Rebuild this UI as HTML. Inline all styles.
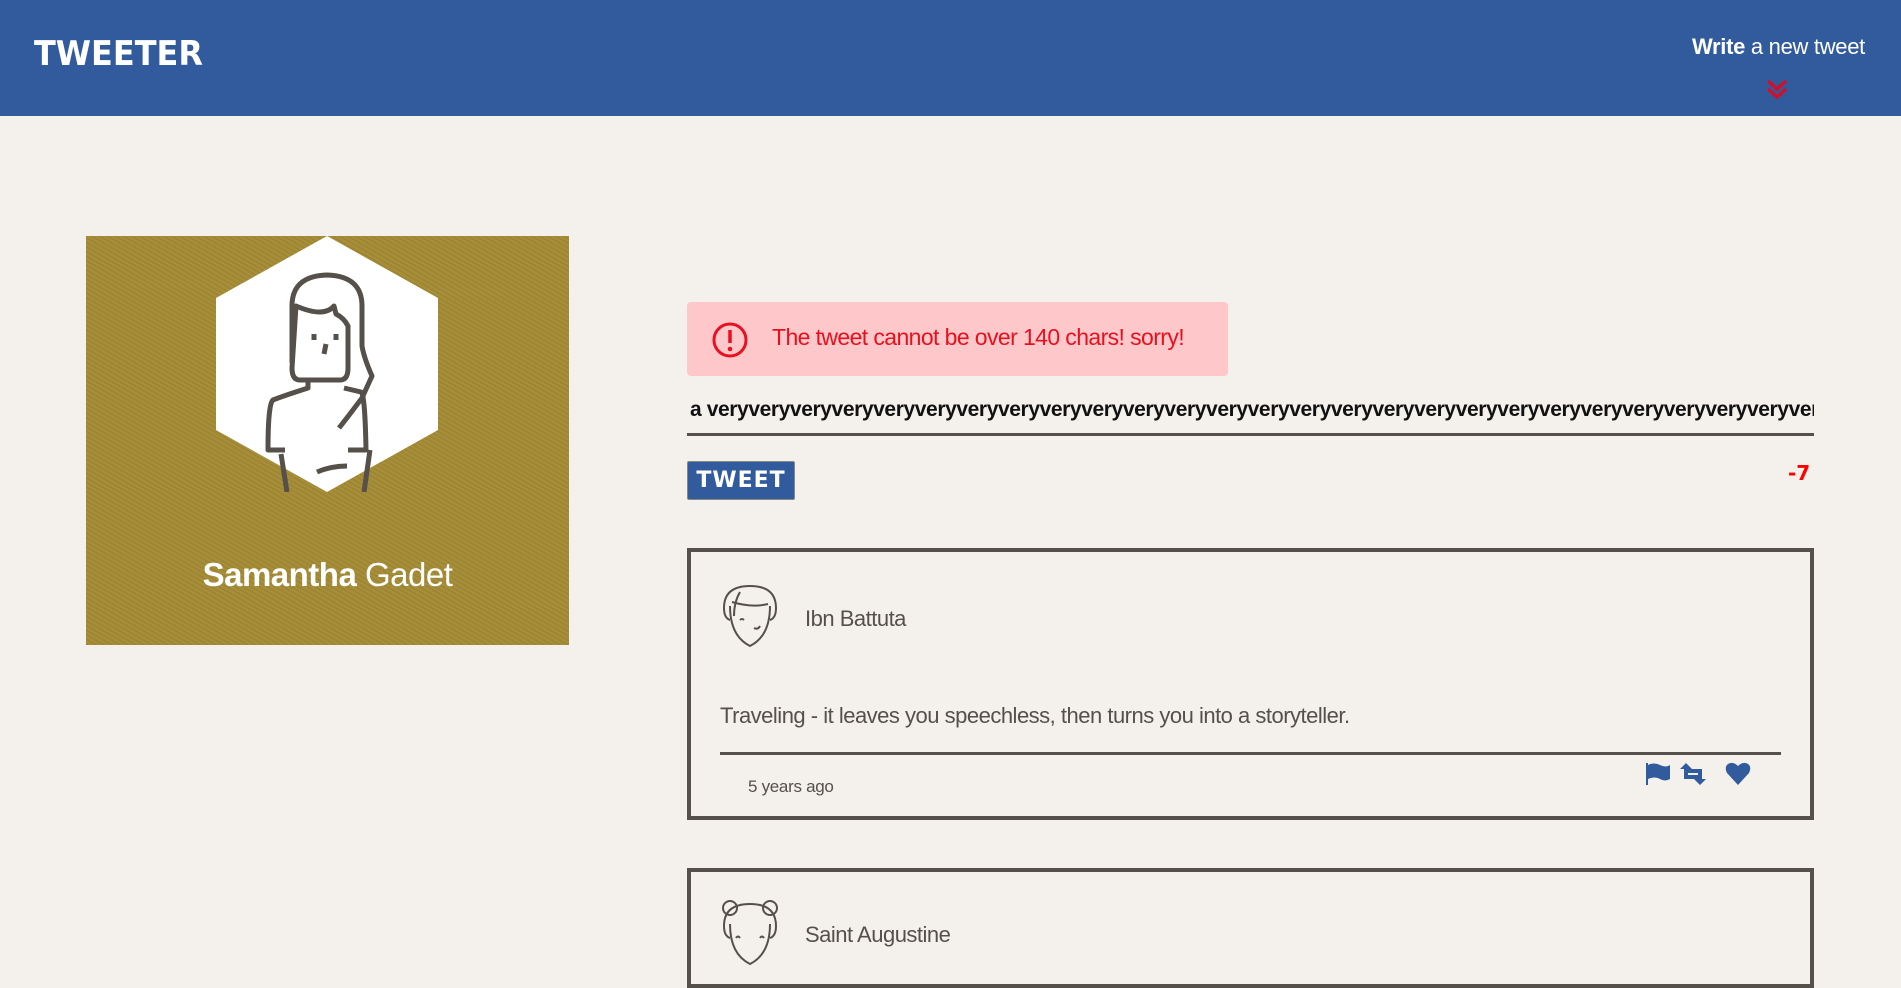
<!DOCTYPE html>
<html><head><meta charset="utf-8"><style>
*{margin:0;padding:0;box-sizing:border-box}
body{width:1901px;height:963px;overflow:hidden;background:#f4f1ec;font-family:"Liberation Sans",sans-serif;color:#555049;position:relative}
.hdr{position:absolute;left:0;top:0;width:1901px;height:116px;background:#325b9e}
.logo{position:absolute;left:34px;top:34px;font:900 34px "DejaVu Sans",sans-serif;color:#fff;letter-spacing:0;transform:scaleX(0.94);transform-origin:left}
.write{position:absolute;right:36px;top:34px;color:#fff;font-size:22px;letter-spacing:-0.3px}
.abs{position:absolute}
.card{position:absolute;left:86px;top:236px;width:483px;height:409px;background:#a48b35;background-image:repeating-linear-gradient(30deg,rgba(0,0,0,.04) 0 2px,rgba(255,255,255,.03) 2px 4px)}
.name{position:absolute;left:0;width:483px;top:320px;text-align:center;color:#fff;font-size:33px;letter-spacing:-0.5px}
.err{position:absolute;left:687px;top:302px;width:541px;height:74px;background:#fec8cb;border-radius:4px}
.err span{position:absolute;left:85px;top:22px;color:#e8101f;font-size:23px;letter-spacing:-0.6px}
.inp{position:absolute;left:690px;top:398px;width:1124px;overflow:hidden;white-space:nowrap;font-weight:bold;font-size:21px;color:#111;letter-spacing:-0.4px}
.ul{position:absolute;left:687px;top:433px;width:1127px;height:3px;background:#555049}
.btn{position:absolute;left:687px;top:461px;width:108px;height:39px;background:#325b9e;border:1px solid #888;border-radius:2px;color:#fff;font:900 22px "DejaVu Sans",sans-serif;text-align:center;line-height:37px;letter-spacing:1px}
.cnt{position:absolute;left:1788px;top:461px;color:#f00;font:900 20px "DejaVu Sans",sans-serif}
.tw{position:absolute;left:687px;width:1127px;border:4px solid #555049}
.tn{position:absolute;left:114px;font-size:22px;letter-spacing:-0.5px}
</style></head><body>
<div class="hdr">
<div class="logo">TWEETER</div>
<div class="write"><b>Write</b> a new tweet</div>
<svg class="abs" style="left:1765px;top:78px" width="24" height="24" viewBox="0 0 24 24"><path d="M3 3l9 8 9-8M3 11l9 8 9-8" fill="none" stroke="#d0102a" stroke-width="3.5"/></svg>
</div>
<div class="card">
<svg class="abs" style="left:130px;top:0" width="222" height="256" viewBox="0 0 222 256"><polygon points="111,0 222,62 222,194 111,256 0,194 0,62" fill="#fff"/>
<g fill="none" stroke="#555049" stroke-width="5" stroke-linejoin="round"><path d="M76 127V70q0-30 35-31 35 1 35 31v40q2 12 10 30l-10 22q-15 20-23 30M76 132q0 12 8 12h40q8 0 8-12V90q-4-8-12-12l-2-8q-10 12-38 0Z"/><path d="M92 144v8q-25 8-35 12-5 4-5 50h17M128 152l17 4q4 2 5 58h-18M65 218l6 38M154 214l-6 42M101 236q14-6 30-6"/><path d="M98 98v6M120 98v6M110 108l-2 10"/></g></svg>
<div class="name"><b>Samantha</b> Gadet</div>
</div>
<div class="err"><svg class="abs" style="left:24px;top:19px" width="38" height="38" viewBox="0 0 38 38"><circle cx="19" cy="19" r="16" fill="none" stroke="#e8101f" stroke-width="3"/><path d="M19 9v13" stroke="#e8101f" stroke-width="3.5"/><circle cx="19" cy="28" r="2.3" fill="#e8101f"/></svg><span>The tweet cannot be over 140 chars! sorry!</span></div>
<div class="inp">a veryveryveryveryveryveryveryveryveryveryveryveryveryveryveryveryveryveryveryveryveryveryveryveryveryveryveryveryveryveryvery</div>
<div class="ul"></div>
<div class="btn">TWEET</div>
<div class="cnt">-7</div>
<div class="tw" style="top:548px;height:272px">
<svg class="abs" style="left:29px;top:30px" width="60" height="66" viewBox="0 0 60 66"><g fill="none" stroke="#555049" stroke-width="2"><path d="M10 38q-6-2-6-12 0-22 26-22 26 0 26 22 0 10-6 12"/><path d="M10 24q0 30 20 40 20-10 20-40"/><path d="M12 20q20 6 36 2M20 10q-6 10-6 24"/><path d="M20 38q2-2 4 0M34 46q4 2 6-2"/></g></svg>
<div class="tn" style="top:54px">Ibn Battuta</div>
<div class="abs" style="left:29px;top:151px;font-size:22px;letter-spacing:-0.5px">Traveling - it leaves you speechless, then turns you into a storyteller.</div>
<div class="abs" style="left:29px;top:200px;width:1061px;height:3px;background:#555049"></div>
<div class="abs" style="left:57px;top:225px;font-size:17px;letter-spacing:-0.3px">5 years ago</div>
<svg class="abs" style="left:953px;top:209px" width="110" height="26" viewBox="0 0 110 26"><g fill="#325b9e"><path d="M2 2h2v22H2zM4 4q6-3 12 0t10 0v14q-5 3-10 0t-12 0z"/><path d="M44 8h14v10h4l-6 6-6-6h4v-6h-10zM54 18H40V8h-4l6-6 6 6h-4v6h10z"/><path d="M94 24L83 12q-3-6 1-9 5-3 10 2 5-5 10-2 4 3 1 9z"/></g></svg>
</div>
<div class="tw" style="top:868px;height:120px">
<svg class="abs" style="left:29px;top:26px" width="60" height="70" viewBox="0 0 60 70"><g fill="none" stroke="#555049" stroke-width="2"><circle cx="10" cy="10" r="7"/><circle cx="50" cy="10" r="7"/><path d="M10 40q-6-2-6-12 0-22 26-22 26 0 26 22 0 10-6 12M10 26q0 30 20 40 20-10 20-40M16 40q2-3 4 0M40 40q2-3 4 0"/></g></svg>
<div class="tn" style="top:50px">Saint Augustine</div>
</div>
</body></html>
